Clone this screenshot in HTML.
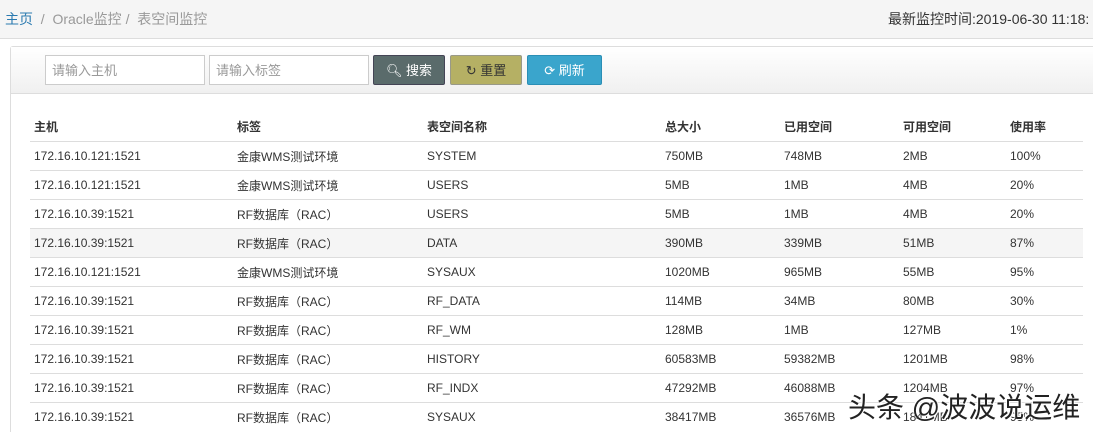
<!DOCTYPE html><html><head><meta charset="utf-8"><style>
html,body{margin:0;width:1093px;height:432px;overflow:hidden}
body{background:#fff;font-family:"Liberation Sans","Noto Sans CJK SC",sans-serif;font-size:12px;color:#333;position:relative}
.bc{position:absolute;left:0;top:0;width:1093px;height:38px;background:#f5f5f5;border-bottom:1px solid #ddd;font-size:14px;line-height:38px}
.bc .l{position:absolute;left:5px;color:#999}.bc .l a{color:#2a7ab0}
.bc .r{position:absolute;left:888px;color:#333;white-space:nowrap}
.panel{position:absolute;left:10px;top:46px;width:1100px;height:500px;border:1px solid #ddd;border-radius:3px}
.ph{height:46px;background:linear-gradient(#fff,#f0f0f0);border-bottom:1px solid #ddd}
input{position:absolute;top:8px;border:1px solid #ccc;padding:0 6px;font:13px "Liberation Sans","Noto Sans CJK SC",sans-serif;box-sizing:border-box;width:160px;height:30px}
input::placeholder{color:#999}
.b{position:absolute;top:8px;height:30px;line-height:30px;color:#fff;font-size:13px;text-align:center;box-sizing:border-box;border-radius:2px}
table{position:absolute;left:30px;top:112px;width:1053px;border-collapse:collapse}
td,th{height:28px;padding:0 0 0 4px;text-align:left;border-top:1px solid #ddd;font-size:12px}
th{font-weight:bold;border-top:none;border-bottom:1px solid #ddd;height:29px}
tr.h td{background:#f5f5f5}
.wm{position:absolute;left:848px;top:386px;font-size:28px;color:#222;white-space:nowrap;text-shadow:1px 1px 0 #fff,-1px -1px 0 #fff}
</style></head><body>
<div class="bc"><span class="l"><a>主页</a> &nbsp;/&nbsp; Oracle监控 / &nbsp;表空间监控</span><span class="r">最新监控时间:2019-06-30 11:18:</span></div>
<div class="panel"><div class="ph">
<input style="left:34px" placeholder="请输入主机"><input style="left:198px" placeholder="请输入标签">
<div class="b" style="left:362px;width:72px;background:#5a6b6b;border:1px solid #445">&#x1F50D;&#xFE0E; 搜索</div>
<div class="b" style="left:439px;width:72px;background:#b5b064;border:1px solid #998;color:#333">↻ 重置</div>
<div class="b" style="left:516px;width:75px;background:#3aa5cc;border:1px solid #2a8eb5">⟳ 刷新</div>
</div></div>
<table>
<tr><th style="width:199px">主机</th><th style="width:186px">标签</th><th style="width:234px">表空间名称</th><th style="width:115px">总大小</th><th style="width:115px">已用空间</th><th style="width:103px">可用空间</th><th>使用率</th></tr>
<tr><td>172.16.10.121:1521</td><td>金康WMS测试环境</td><td>SYSTEM</td><td>750MB</td><td>748MB</td><td>2MB</td><td>100%</td></tr>
<tr><td>172.16.10.121:1521</td><td>金康WMS测试环境</td><td>USERS</td><td>5MB</td><td>1MB</td><td>4MB</td><td>20%</td></tr>
<tr><td>172.16.10.39:1521</td><td>RF数据库（RAC）</td><td>USERS</td><td>5MB</td><td>1MB</td><td>4MB</td><td>20%</td></tr>
<tr class="h"><td>172.16.10.39:1521</td><td>RF数据库（RAC）</td><td>DATA</td><td>390MB</td><td>339MB</td><td>51MB</td><td>87%</td></tr>
<tr><td>172.16.10.121:1521</td><td>金康WMS测试环境</td><td>SYSAUX</td><td>1020MB</td><td>965MB</td><td>55MB</td><td>95%</td></tr>
<tr><td>172.16.10.39:1521</td><td>RF数据库（RAC）</td><td>RF_DATA</td><td>114MB</td><td>34MB</td><td>80MB</td><td>30%</td></tr>
<tr><td>172.16.10.39:1521</td><td>RF数据库（RAC）</td><td>RF_WM</td><td>128MB</td><td>1MB</td><td>127MB</td><td>1%</td></tr>
<tr><td>172.16.10.39:1521</td><td>RF数据库（RAC）</td><td>HISTORY</td><td>60583MB</td><td>59382MB</td><td>1201MB</td><td>98%</td></tr>
<tr><td>172.16.10.39:1521</td><td>RF数据库（RAC）</td><td>RF_INDX</td><td>47292MB</td><td>46088MB</td><td>1204MB</td><td>97%</td></tr>
<tr><td>172.16.10.39:1521</td><td>RF数据库（RAC）</td><td>SYSAUX</td><td>38417MB</td><td>36576MB</td><td>1841MB</td><td>95%</td></tr>
</table>
<div class="wm">头条 @波波说运维</div>
</body></html>
